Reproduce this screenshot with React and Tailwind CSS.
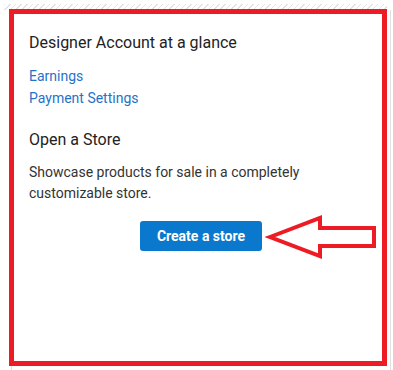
import React from 'react';

const Arrow = () => (
    <svg className="absolute left-[265px] top-[213px]" width="114" height="47" viewBox="265 213 114 47">
        <polygon
            points="270,237 320,218 320,228 374,228 374,246 320,246 320,256"
            fill="none"
            stroke="#ed1c24"
            strokeWidth="4"
            strokeLinejoin="miter"
        />
    </svg>
);

export default function App() {
    return (
        <div className="relative w-[393px] h-[370px] bg-white overflow-hidden" style={{ fontFamily: 'Roboto, "Liberation Sans", sans-serif' }}>
            <div className="absolute left-[4px] right-[6px] top-[4px] h-[6px] bg-[repeating-linear-gradient(135deg,#e3e3e3_0px,#e3e3e3_1px,#ffffff_1px,#ffffff_4px)]" />
            <div className="absolute right-[2px] top-[10px] bottom-0 w-px bg-[#e0e0e0]" />
            <div className="absolute left-[11px] top-[366px] bottom-0 w-px bg-[#e0e0e0]" />

            <div className="relative ml-[9px] mt-[9px] w-[378px] h-[357px] border-[5px] border-[#ed1c24] bg-white pl-[15px] pt-[17px] flex flex-col items-start">
                <h2 className="text-[16px] leading-[24px] text-[#222]">Designer Account at a glance</h2>
                <div className="mt-[10px] flex flex-col text-[14px] leading-[22px] text-[#1f73c8]">
                    <a href="#">Earnings</a>
                    <a href="#">Payment Settings</a>
                </div>
                <h3 className="mt-[19px] text-[16px] leading-[24px] text-[#222]">Open a Store</h3>
                <p className="mt-[10px] w-[300px] text-[14px] leading-[21px] text-[#333]">
                    Showcase products for sale in a completely customizable store.
                </p>
                <button className="mt-[17px] ml-[111px] w-[122px] h-[30px] rounded-[3px] bg-[#0a78cc] text-white text-[14px] font-bold">
                    Create a store
                </button>
            </div>
            <Arrow />
        </div>
    );
}
